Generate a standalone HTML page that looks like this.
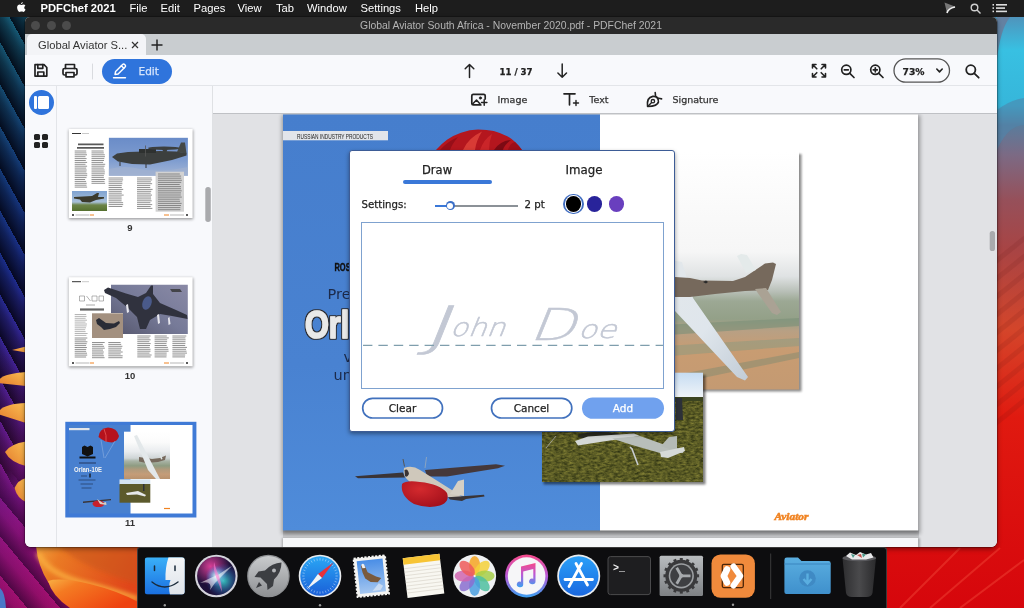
<!DOCTYPE html>
<html><head><meta charset="utf-8">
<style>
*{box-sizing:border-box;margin:0;padding:0}
html,body{width:1024px;height:608px;overflow:hidden;background:#000;font-family:"Liberation Sans","DejaVu Sans",sans-serif;}
#root{opacity:.999;position:relative;width:1024px;height:608px;overflow:hidden;background:#1a1030}
.abs{position:absolute}
#menubar{left:0;top:0;width:1024px;height:17px;background:#1d1d1d;color:#fff;font-size:11.200px;line-height:17.500px;overflow:hidden}
#menubar span{position:absolute;top:0;white-space:nowrap}
#win{left:25px;top:17px;width:972px;height:530px;border-radius:5px 5px 6px 6px;overflow:hidden;background:#f8f9fc;box-shadow:0 0 0 .5px rgba(0,0,0,.45),0 2px 5px rgba(0,0,0,.45)}
#titlebar{left:0;top:0;width:972px;height:17px;background:#2a2a2a;color:#b4b4b4;font-size:10.400px;line-height:18.500px;text-align:center;overflow:hidden}
#tabbar{left:0;top:17px;width:972px;height:21px;background:#c9cdd0}
#tab{left:2px;top:0;width:119px;height:21px;background:#f3f4f7;border-radius:5px 5px 0 0;font-size:11.2px;line-height:22px;color:#333;padding-left:11px;white-space:nowrap}
#toolbar{left:0;top:38px;width:972px;height:31px;background:#f8f9fc;border-bottom:1px solid #e3e5e9}
#iconstrip{left:0;top:69px;width:32px;height:461px;background:#f8f9fc;border-right:1px solid #e3e5e9}
#thumbs{left:32px;top:69px;width:156px;height:461px;background:#f8f9fc;border-right:1px solid #dfe1e4}
#subbar{left:188px;top:69px;width:784px;height:28px;background:#f8f9fc;border-bottom:1px solid #bfc1c5}
#doc{left:188px;top:97px;width:784px;height:433px;background:#e1e2e5;overflow:hidden}
#dock{left:137px;top:547px;width:750px;height:61px;background:#0d0d0f;border:1px solid #3a3a3a;border-bottom:none;border-radius:3px 3px 0 0}

.dj{font-family:"DejaVu Sans","Liberation Sans",sans-serif;-webkit-text-stroke:.25px currentColor}
.tl{position:absolute;top:4px;width:9px;height:9px;border-radius:50%;background:#4b4b4b}
.gq{position:absolute;width:6.500px;height:6.500px;border-radius:1.600px;background:#222}
.sb{top:8px;font-size:9.500px;line-height:12px;color:#333;white-space:nowrap}

#dlg{left:136px;top:36px;width:326px;height:282px;background:#fff;border:1px solid #3d5c96;border-radius:3px;box-shadow:0 2px 4px rgba(0,0,0,.4)}
.btn{height:21px;font-size:10.500px;line-height:21px;text-align:center;color:#222}
</style></head><body>
<div id="root">
<div class="abs" style="left:0;top:0;width:140px;height:608px;background:linear-gradient(180deg,rgba(0,0,0,0) 55%,rgba(140,16,110,.5) 100%),repeating-linear-gradient(241deg,rgba(0,0,0,0) 0,rgba(0,0,8,.35) 7px,rgba(0,0,10,.82) 20.400px),linear-gradient(180deg,#17607a 0,#15506e 10%,#14387a 30%,#1c2c8c 45%,#3a2496 58%,#5a1c90 72%,#8a1486 85%,#a01078 100%)"></div>
<div class="abs" style="left:0;top:470px;width:140px;height:138px;background:linear-gradient(180deg,rgba(0,0,0,0) 0,rgba(0,0,0,1) 30px) ,#000;-webkit-mask-image:linear-gradient(180deg,transparent 0,#000 30px);mask-image:linear-gradient(180deg,transparent 0,#000 30px)"><div class="abs" style="left:0;top:0;width:140px;height:138px;background:repeating-linear-gradient(230deg,rgba(40,0,50,0) 0,rgba(40,0,50,.12) 9px,rgba(30,0,40,.62) 25px),linear-gradient(180deg,#6a188a 0,#8c1480 40%,#a20f6c 100%)"></div></div>
<svg class="abs" style="left:0;top:0" width="1024" height="608" viewBox="0 0 1024 608">
<defs>
<linearGradient id="wr" x1="0" y1="0" x2="0" y2="1"><stop offset="0.028" stop-color="#4f94bc"/><stop offset="0.082" stop-color="#38c0e2"/><stop offset="0.173" stop-color="#36b6da"/><stop offset="0.206" stop-color="#5a7c9c"/><stop offset="0.255" stop-color="#7c6a84"/><stop offset="0.329" stop-color="#96505a"/><stop offset="0.411" stop-color="#a84444"/><stop offset="0.543" stop-color="#d4452a"/><stop offset="0.686" stop-color="#e01a10"/><stop offset="1.000" stop-color="#d6060c"/></linearGradient>
<linearGradient id="wo" x1="0" y1="0" x2="1" y2="1">
<stop offset="0" stop-color="#f09a38"/><stop offset="0.500" stop-color="#ee6a1c"/><stop offset="1" stop-color="#e83a10"/>
</linearGradient>
<linearGradient id="wo1" x1="0" y1="0" x2="1" y2="0.300"><stop offset="0" stop-color="#f2a23c"/><stop offset="0.250" stop-color="#ea7a24"/><stop offset="1" stop-color="#e0461a"/></linearGradient><linearGradient id="wo2" x1="0" y1="0" x2="1" y2="0.600"><stop offset="0" stop-color="#f8b044"/><stop offset="0.300" stop-color="#f47a22"/><stop offset="1" stop-color="#ee4210"/></linearGradient><filter id="wbl" x="-20%" y="-20%" width="140%" height="140%"><feGaussianBlur stdDeviation="2"/></filter><linearGradient id="sp" x1="1" y1="0" x2="0" y2="1">
<stop offset="0" stop-color="#fbbf52"/><stop offset="1" stop-color="#e27a2c"/>
</linearGradient>
</defs>
<g fill="url(#sp)">
<path d="M26 346.500 L26 352.500 L12 350 Z"/>
<path d="M26 372 L26 386 L-2 383 Q-2 374 26 372 Z"/>
<path d="M26 403 L26 423 L-2 414 Q0 404 26 403 Z"/>
<path d="M26 441.500 L26 466 Q10 462 5 452 Q10 444 26 441.500 Z"/>
<path d="M26 478 L26 502 Q17 498 14.500 488 Q18 480 26 478 Z"/>
</g>
<path d="M0 588 Q5 592 6 608 L0 608 Z" fill="#4a78c8"/>
<path d="M36 546 L140 546 L140 608 L72 608 Q58 598 48 582 Q38 566 36 546 Z" fill="url(#wo1)"/>
<path d="M60 547 Q80 566 137 584 L137 547 Z" fill="#c8561a" opacity="0.550" filter="url(#wbl)"/>
<path d="M38 553 Q46 572 80 582 Q112 590 138 599" fill="none" stroke="#fbb040" stroke-width="5" opacity="0.850" filter="url(#wbl)"/>
<path d="M48 581 Q60 577 90 584 Q118 591 138 602 L138 608 L70 608 Q52 596 48 581 Z" fill="url(#wo2)"/>
<rect x="880" y="0" width="144" height="608" fill="url(#wr)"/>
<g stroke="#5a1010" stroke-width="5" opacity="0.110" fill="none">
<path d="M995 262 L1026 237"/><path d="M995 280 L1026 255"/><path d="M995 298 L1026 273"/><path d="M995 316 L1026 291"/><path d="M995 334 L1026 309"/><path d="M995 352 L1026 327"/><path d="M995 370 L1026 345"/><path d="M995 388 L1026 363"/><path d="M995 406 L1026 381"/><path d="M995 424 L1026 399"/>
</g>
<g stroke="#ff6a50" stroke-width="2" opacity="0.300" fill="none">
<path d="M900 608 L960 548"/><path d="M930 608 L1000 548"/><path d="M960 608 L1024 560"/>
</g>
<path d="M997 17 L1010 17 Q1000 30 997 60 Z" fill="#6a7a98" opacity="0.800"/>
<path d="M997 110 Q1010 100 1024 98 L1024 125 Q1008 125 997 150 Z" fill="#4f86ac" opacity="0.600"/>
</svg>
<div id="menubar" class="abs">
<svg class="abs" style="left:0;top:0" width="1024" height="17" viewBox="0 0 1024 17">
<g fill="#fff">
<path d="M23.6 4.6c-.9 0-1.6.5-2.1.5s-1.100-.5-1.900-.5c-1.200 0-2.500 1-2.500 3 0 1.900 1.300 4.400 2.400 4.400.7 0 1-.4 1.900-.4s1.100.4 1.900.4c.9 0 1.700-1.200 2.200-2.400-1.700-.8-1.600-3.200-.1-3.900-.5-.7-1.100-1.100-1.800-1.100z"/>
<path d="M22.700 2c-.8.100-1.700.9-1.600 2.100.9 0 1.700-.9 1.600-2.100z"/>
</g>
<g fill="none" stroke="#cfcfcf" stroke-width="1.400">
<circle cx="974.500" cy="7.500" r="3.300"/><path d="M977 10 L980.500 13.500"/>
</g>
<g fill="#dedede"><rect x="992.500" y="4" width="1.500" height="1.600"/><rect x="996" y="4" width="11" height="1.600"/>
<rect x="992.500" y="7.300" width="1.500" height="1.600"/><rect x="996" y="7.300" width="9" height="1.600"/>
<rect x="992.500" y="10.600" width="1.500" height="1.600"/><rect x="996" y="10.600" width="11" height="1.600"/></g>
<path d="M944.500 2.500 L955.500 6.800 L950.500 8.500 L947 13 Z" fill="#777"/>
<path d="M947 13 Q948 8.500 955 7" fill="none" stroke="#eee" stroke-width="1.600"/>
</svg>
<span style="left:40.500px;font-weight:bold">PDFChef 2021</span>
<span style="left:129.500px">File</span>
<span style="left:160.500px">Edit</span>
<span style="left:193.500px">Pages</span>
<span style="left:237.500px">View</span>
<span style="left:276px">Tab</span>
<span style="left:307px">Window</span>
<span style="left:360.500px">Settings</span>
<span style="left:415px">Help</span>
</div>
<div id="win" class="abs">
 <div id="titlebar" class="abs"><i class="tl" style="left:6px"></i><i class="tl" style="left:22px"></i><i class="tl" style="left:37px"></i>Global Aviator South Africa - November 2020.pdf - PDFChef 2021</div>
 <div id="tabbar" class="abs"><div id="tab" class="abs">Global Aviator S...<svg class="abs" style="left:103.500px;top:7px" width="8" height="8" viewBox="0 0 8 8"><path d="M1 1L7 7M7 1L1 7" stroke="#333" stroke-width="1.200"/></svg></div><svg class="abs" style="left:126px;top:5px" width="12" height="12" viewBox="0 0 12 12"><path d="M6 .5V11.500M.5 6H11.500" stroke="#222" stroke-width="1.500"/></svg></div>
 <div id="toolbar" class="abs">
<svg class="abs" style="left:0;top:0" width="972" height="31" viewBox="25 55 972 31" fill="none" stroke="#222" stroke-width="1.700" stroke-linejoin="round" stroke-linecap="round">
<!-- save -->
<path d="M35 64.700h9l2.800 2.800v8.600h-11.800z"/><path d="M37.800 64.700v3.600h5v-3.600M37.800 76v-4h6v4"/>
<!-- print -->
<path d="M65.500 68.500v-4h9v4"/><rect x="63" y="68.500" width="14" height="6.500" rx="1.500"/><rect x="66" y="72.500" width="8" height="4.300" fill="#f8f9fc"/>
<path d="M92.500 64V79" stroke="#d9dbdf" stroke-width="1"/>
<!-- arrows -->
<path d="M469.500 77.500V64.500M465.200 68.800l4.300-4.300 4.300 4.300" stroke-width="1.500"/>
<path d="M562.200 64V77.200M557.900 73l4.300 4.300 4.300-4.300" stroke-width="1.500"/>
<!-- fullscreen -->
<g stroke-width="1.600"><path d="M812.500 68v-3.500h3.500M812.800 64.800l4 4M825.500 68v-3.500h-3.500M825.200 64.800l-4 4M812.500 73.500v3.500h3.500M812.800 76.700l4-4M825.500 73.500v3.500h-3.500M825.200 76.700l-4-4"/></g>
<!-- zoom out -->
<g stroke-width="1.700"><circle cx="846.300" cy="69.800" r="4.600"/><path d="M849.800 73.300l4.200 4.200M844.300 69.800h4"/></g>
<g stroke-width="1.700"><circle cx="875.300" cy="69.800" r="4.600"/><path d="M878.800 73.300l4.200 4.200M873.300 69.800h4M875.300 67.800v4"/></g>
<rect x="894" y="58.800" width="55.500" height="23.400" rx="11.700" stroke="#555" stroke-width="1.300"/>
<path d="M936.800 69l2.700 2.900 2.700-2.900" stroke-width="1.600"/>
<g stroke-width="1.800"><circle cx="970.800" cy="69.800" r="4.600"/><path d="M974.300 73.300l4.400 4.400"/></g>
</svg>
<div class="abs" style="left:77px;top:3.500px;width:70px;height:25.500px;border-radius:13px;background:#2f74dc"></div>
<svg class="abs" style="left:86px;top:7px" width="18" height="18" viewBox="111 62 18 18" fill="none" stroke="#fff" stroke-width="1.400" stroke-linejoin="round" stroke-linecap="round"><path d="M113.500 77.800h12"/><path d="M115 74.500l.6-3 7-7c.6-.6 1.500-.6 2.100 0l.4.400c.6.600.6 1.500 0 2.100l-7 7z"/><path d="M121.300 65.700l2.500 2.500"/></svg>
<div class="abs dj" style="left:113.500px;top:9.500px;font-size:10.500px;line-height:13px;color:#d6e4fb">Edit</div>
<div class="abs dj" style="left:474.500px;top:11.500px;font-size:8.600px;line-height:11px;color:#222;font-weight:bold;white-space:nowrap">11 / 37</div>
<div class="abs dj" style="left:877.500px;top:11px;font-size:9.200px;line-height:11px;color:#222;font-weight:bold">73%</div>
</div>
 <div id="iconstrip" class="abs">
<div class="abs" style="left:3.500px;top:3.800px;width:25.400px;height:25.400px;border-radius:50%;background:#2f74dc"></div>
<div class="abs" style="left:8.600px;top:10px;width:3px;height:12.600px;border-radius:1px;background:#fff"></div>
<div class="abs" style="left:13.400px;top:10px;width:10.600px;height:12.600px;border-radius:1.500px;background:#fff"></div>
<i class="gq" style="left:8.500px;top:47.500px"></i><i class="gq" style="left:16.500px;top:47.500px"></i><i class="gq" style="left:8.500px;top:55.500px"></i><i class="gq" style="left:16.500px;top:55.500px"></i>
</div>
 <div id="thumbs" class="abs">
<svg class="abs" style="left:0;top:0" width="156" height="461" viewBox="57 86 156 461">
<defs>
<filter id="tb2" x="-10%" y="-10%" width="120%" height="120%"><feGaussianBlur stdDeviation="1.600"/></filter>
<linearGradient id="t1sky" x1="0" y1="0" x2="0" y2="1"><stop offset="0" stop-color="#6a8cc8"/><stop offset="0.600" stop-color="#7f9dd0"/><stop offset="1" stop-color="#a3b6d6"/></linearGradient>
<linearGradient id="t1b" x1="0" y1="0" x2="0" y2="1"><stop offset="0" stop-color="#7fa3d2"/><stop offset="0.550" stop-color="#a9c0d8"/><stop offset="0.700" stop-color="#6c8448"/><stop offset="1" stop-color="#55702f"/></linearGradient>
<linearGradient id="t2sky" x1="0" y1="1" x2="1" y2="0"><stop offset="0" stop-color="#55566c"/><stop offset="0.500" stop-color="#767a98"/><stop offset="1" stop-color="#8a8aa6"/></linearGradient>
<linearGradient id="p1t" x1="0" y1="0" x2="0" y2="1">
<stop offset="0" stop-color="#ffffff"/><stop offset="0.220" stop-color="#fbfbfb"/><stop offset="0.420" stop-color="#e9ecee"/><stop offset="0.560" stop-color="#cfd5d6"/><stop offset="0.620" stop-color="#a9b3a6"/><stop offset="0.720" stop-color="#8e9c82"/><stop offset="0.800" stop-color="#b09a7c"/><stop offset="0.900" stop-color="#c49c78"/><stop offset="1" stop-color="#b8926e"/>
</linearGradient>
</defs>
<rect x="68.800" y="129.800" width="124.300" height="89.500" fill="#000" opacity="0.400" filter="url(#tb2)"/>
<rect x="68.800" y="129" width="123.800" height="89" fill="#fff"/>
<path d="M72 133.500h9" stroke="#333" stroke-width="1"/><path d="M82 133.500h7" stroke="#bbb" stroke-width="0.800"/>
<rect x="108.900" y="137.800" width="79" height="38" fill="url(#t1sky)"/>
<path d="M112 157 L117 153.500 L128 152 L160 151 L176 151.500 L186.500 153 L186.500 155.500 L172 160 L150 164.500 L132 164 L118 161.500 Z" fill="#3c3f3e"/>
<path d="M139 149 h17 v4 h-17z" fill="#2e3130"/><path d="M145.500 145.500 v11" stroke="#555" stroke-width="0.800"/>
<ellipse cx="164" cy="148.300" rx="16" ry="1.700" fill="#3c3f3e"/><path d="M162 149 l1.500 3 h3 l1 -3z" fill="#3c3f3e"/>
<path d="M177 152 L181 142.500 L185 142.500 L186.500 153.500 Z" fill="#444846"/>
<path d="M120 162v4M146 164v4" stroke="#333" stroke-width="1"/>
<path d="M108.900 169 Q125 165 140 169 Q160 173 187.900 167 L187.900 175.800 L108.900 175.800 Z" fill="#9fb0d0" opacity="0.800"/>
<path d="M78 144.300H103.500M77 147.800H104" stroke="#222" stroke-width="1.700" opacity="0.750"/>
<path d="M74.7 151.0H86.2M74.7 152.9H86.4M74.7 154.8H87.0M74.7 156.7H85.5M74.7 158.6H86.6M74.7 160.5H85.8M74.7 162.4H87.1M74.7 164.3H85.5M74.7 166.2H87.1M74.7 168.1H86.2M74.7 170.0H86.7M74.7 171.9H86.4M74.7 173.8H87.2M74.7 175.7H87.2M74.7 177.6H86.5M74.7 179.5H85.1M74.7 181.4H86.1M74.7 183.3H86.7M74.7 185.2H86.5M74.7 187.1H87.1" stroke="#3a3a3a" stroke-width="0.9" opacity="0.62" fill="none"/>
<path d="M91.5 151.0H103.6M91.5 152.9H103.8M91.5 154.8H104.8M91.5 156.7H104.9M91.5 158.6H104.3M91.5 160.5H104.0M91.5 162.4H103.1M91.5 164.3H105.2M91.5 166.2H104.6M91.5 168.1H103.8M91.5 170.0H104.6M91.5 171.9H104.9M91.5 173.8H104.7M91.5 175.7H103.9M91.5 177.6H103.9M91.5 179.5H105.1M91.5 181.4H104.5M91.5 183.3H105.1" stroke="#3a3a3a" stroke-width="0.9" opacity="0.62" fill="none"/>
<path d="M108.6 178.0H122.9M108.6 179.9H123.1M108.6 181.8H122.3M108.6 183.7H122.4M108.6 185.6H121.7M108.6 187.5H121.8M108.6 189.4H123.2M108.6 191.3H121.7M108.6 193.2H121.8M108.6 195.1H123.7M108.6 197.0H121.6M108.6 198.9H121.7M108.6 200.8H121.6M108.6 202.7H123.1M108.6 204.6H123.2M108.6 206.5H122.3" stroke="#3a3a3a" stroke-width="0.9" opacity="0.62" fill="none"/>
<path d="M137.0 178.0H151.6M137.0 179.9H152.1M137.0 181.8H150.9M137.0 183.7H152.1M137.0 185.6H150.3M137.0 187.5H150.3M137.0 189.4H152.6M137.0 191.3H151.2M137.0 193.2H150.7M137.0 195.1H152.0M137.0 197.0H151.0M137.0 198.9H151.1M137.0 200.8H151.7M137.0 202.7H150.4M137.0 204.6H152.2M137.0 206.5H150.7M137.0 208.4H152.4" stroke="#3a3a3a" stroke-width="0.9" opacity="0.62" fill="none"/>
<rect x="155.600" y="171.700" width="28.400" height="40" fill="#d2d2d2"/>
<path d="M158.0 174.0H179.8M158.0 176.1H181.1M158.0 178.2H181.2M158.0 180.3H181.9M158.0 182.4H181.2M158.0 184.5H179.7M158.0 186.6H181.0M158.0 188.7H181.0M158.0 190.8H181.7M158.0 192.9H181.0M158.0 195.0H180.8M158.0 197.1H181.8M158.0 199.2H179.7M158.0 201.3H180.1M158.0 203.4H181.6M158.0 205.5H181.0M158.0 207.6H180.4M158.0 209.7H180.4" stroke="#333" stroke-width="0.8" opacity="0.6" fill="none"/>
<rect x="72" y="191" width="35" height="20" fill="url(#t1b)"/>
<path d="M74 197 L92 196 L97 193 L99 193 L98 197 L104 197 L104 198.500 L96 200 L90 202.500 L82 202 L80 199.500 L74 198.500 Z" fill="#3b3a2c"/>
<path d="M72 215h2" stroke="#222" stroke-width="1.400"/><path d="M75.500 215h14" stroke="#999" stroke-width="0.700"/><path d="M90 215h4" stroke="#f08322" stroke-width="1"/>
<path d="M164 215h5" stroke="#f08322" stroke-width="1"/><path d="M170 215h14" stroke="#999" stroke-width="0.700"/><path d="M186 215h2" stroke="#222" stroke-width="1.400"/>
<rect x="68.800" y="278" width="124.300" height="89.500" fill="#000" opacity="0.400" filter="url(#tb2)"/>
<rect x="68.800" y="277.200" width="123.800" height="89" fill="#fff"/>
<path d="M72 281.700h9" stroke="#333" stroke-width="1"/><path d="M82 281.700h7" stroke="#bbb" stroke-width="0.800"/>
<path d="M111 284.700 H187.800 V334 H123 V313 H111 Z" fill="url(#t2sky)"/>
<path d="M104 290 L108 287.500 L126 293.500 L138 297 L146 293 L151 285.500 L153 285.500 L153 294 L160 303 L176 310 L187 315 L187.500 319 L172 316 L160 314 L150 320 L146 329 L140 329 L137 317 L128 308 L116 298 L105 293 Z" fill="#30323e"/>
<ellipse cx="147" cy="303" rx="4.500" ry="7" fill="#4a5a8a" transform="rotate(20 147 303)"/>
<path d="M126 305 l2 -1 l1 8 l-2 1z M157 315 l2 -1 l1 9 l-2 1z M168 318 l1.500 -1 l1 7 l-2 1z" fill="#e8e8ee"/>
<path d="M170 289 h10 l2 3 h-10z" fill="#333" opacity="0.800"/>
<rect x="92" y="313.300" width="31" height="24.700" fill="#a3907f"/>
<path d="M96 320 L99 318 L106 323 L114 323.500 L119 321 L120 323 L116 327 L110 329 L104 330 L101 327 L97 324 Z" fill="#2a2c36"/>
<path d="M79.500 296h5v5h-5zM86.500 296l4 5M92 296h5v5h-5zM99 296h4.500v5H99z" stroke="#666" stroke-width="0.700" fill="none" opacity="0.700"/><path d="M86 305h9" stroke="#888" stroke-width="1.200" opacity="0.600"/>
<path d="M80 309.500H104" stroke="#222" stroke-width="2.200" opacity="0.700"/>
<path d="M74.7 314.5H86.2M74.7 316.4H86.5M74.7 318.3H85.6M74.7 320.2H87.0M74.7 322.1H85.5M74.7 324.0H87.0M74.7 325.9H86.6M74.7 327.8H86.0M74.7 329.7H85.2M74.7 331.6H85.6M74.7 333.5H87.6M74.7 335.4H86.4" stroke="#777" stroke-width="0.9" opacity="0.6" fill="none"/>
<path d="M74.7 338.0H87.3M74.7 339.9H85.9M74.7 341.8H87.4M74.7 343.7H86.7M74.7 345.6H86.1M74.7 347.5H86.9M74.7 349.4H86.2M74.7 351.3H86.1M74.7 353.2H87.0M74.7 355.1H87.2M74.7 357.0H86.1" stroke="#3a3a3a" stroke-width="0.9" opacity="0.62" fill="none"/>
<path d="M92.0 342.5H104.7M92.0 344.4H102.8M92.0 346.3H104.1M92.0 348.2H104.8M92.0 350.1H103.0M92.0 352.0H103.8M92.0 353.9H103.4M92.0 355.8H103.9M92.0 357.7H104.6" stroke="#3a3a3a" stroke-width="0.9" opacity="0.62" fill="none"/>
<path d="M108.3 342.5H120.6M108.3 344.4H121.2M108.3 346.3H122.4M108.3 348.2H121.7M108.3 350.1H121.0M108.3 352.0H122.7M108.3 353.9H120.7M108.3 355.8H122.7M108.3 357.7H122.5" stroke="#3a3a3a" stroke-width="0.9" opacity="0.62" fill="none"/>
<path d="M137.3 336.0H150.6M137.3 337.9H149.5M137.3 339.8H150.6M137.3 341.7H149.3M137.3 343.6H150.7M137.3 345.5H150.0M137.3 347.4H149.7M137.3 349.3H150.5M137.3 351.2H150.5M137.3 353.1H149.5M137.3 355.0H151.6M137.3 356.9H150.7" stroke="#3a3a3a" stroke-width="0.9" opacity="0.62" fill="none"/>
<path d="M154.6 336.0H166.8M154.6 337.9H168.8M154.6 339.8H167.2M154.6 341.7H167.1M154.6 343.6H166.5M154.6 345.5H166.7M154.6 347.4H167.9M154.6 349.3H168.4M154.6 351.2H168.6M154.6 353.1H166.7M154.6 355.0H166.7M154.6 356.9H166.5" stroke="#3a3a3a" stroke-width="0.9" opacity="0.62" fill="none"/>
<path d="M172.4 336.0H186.3M172.4 337.9H185.4M172.4 339.8H185.6M172.4 341.7H185.5M172.4 343.6H185.4M172.4 345.5H185.2M172.4 347.4H187.0M172.4 349.3H186.0M172.4 351.2H186.5M172.4 353.1H187.0M172.4 355.0H185.2M172.4 356.9H185.0" stroke="#3a3a3a" stroke-width="0.9" opacity="0.62" fill="none"/>
<path d="M72 363h2" stroke="#222" stroke-width="1.400"/><path d="M75.500 363h14" stroke="#999" stroke-width="0.700"/><path d="M90 363h4" stroke="#f08322" stroke-width="1"/>
<path d="M164 363h5" stroke="#f08322" stroke-width="1"/><path d="M170 363h14" stroke="#999" stroke-width="0.700"/><path d="M186 363h2" stroke="#222" stroke-width="1.400"/>
<rect x="65.300" y="421.800" width="131.100" height="95.700" fill="#3f7ad6"/>
<rect x="69" y="425" width="61.500" height="88.500" fill="#4880cf"/>
<rect x="130.500" y="425" width="62" height="88.500" fill="#fff"/>
<rect x="69" y="428" width="20.500" height="2.200" fill="#e2e5ea"/>
<path d="M98.500 437 Q99 429 108 427.600 Q117 428 119 436 Q118 441 112 442.500 Q104 442 98.500 437Z" fill="#b5121c"/><path d="M104 429 Q107 435 106 442" stroke="#e04a4a" stroke-width="1" fill="none"/>
<path d="M101 440 L104 458 M115 441 L105 458" stroke="#dfe6f2" stroke-width="0.400" opacity="0.700"/>
<path d="M82 447 L84.500 445.500 L87.500 447 L90.500 445.500 L93 447 L93 454 L87.500 456.500 L82 454 Z" fill="#111"/><rect x="79.500" y="456.500" width="16" height="2" fill="#111"/>
<path d="M79 463h17" stroke="#1c2a4a" stroke-width="1.400" opacity="0.600"/>
<text x="74" y="472" font-family="Liberation Sans,sans-serif" font-weight="bold" font-size="7.600" fill="#f4f4f4" textLength="28" lengthAdjust="spacingAndGlyphs">Orlan-10E</text>
<path d="M81 476h6M78.500 480h17M80.500 484h12.500M81.500 488h10" stroke="#1c2a4a" stroke-width="1.200" opacity="0.600"/><path d="M90 473.500v4" stroke="#111" stroke-width="1.300"/>
<path d="M83 501.500 L111 499 L111 500.300 L83 503 Z" fill="#3a3436"/><ellipse cx="98.500" cy="503.800" rx="6" ry="3.300" fill="#c8202a"/><path d="M97 499 L103 503 L106 502 L106.500 505 L100 504Z" fill="#d5cfc4"/>
<rect x="124" y="431.700" width="46" height="47.300" fill="url(#p1t)"/>
<path d="M139 457 L152 459 L160 458 L166 455.500 L165 460 L158 462 L146 463 L139 461.500Z" fill="#76695c"/><path d="M134 436 L137 435 L160 479 L156 479 L148 470 Z" fill="#e3e8ea"/><path d="M159 453 L160.500 452 L162.500 459 L161 459.500Z" fill="#dfe6e6"/>
<rect x="119.500" y="479.400" width="30.800" height="5" fill="#d5e4f2"/><rect x="119.500" y="484" width="30.800" height="18.700" fill="#5c5a2c"/>
<path d="M126 493 L138 491 L146 495 L145 496.500 L137 494.500 L127 495Z" fill="#e6e8ea"/><path d="M143 484 h1.500 v7 h-1.500z" fill="#2c3038"/>
<path d="M164 508.500h6" stroke="#f08322" stroke-width="1.200"/>
<rect x="205.300" y="187" width="5.500" height="35" rx="2.700" fill="#a9aaad"/>
<g font-family="Liberation Sans,sans-serif" font-weight="bold" font-size="9.500" fill="#333" text-anchor="middle">
<text x="130" y="230.700">9</text><text x="130" y="379.200">10</text><text x="130" y="525.900">11</text>
</g>
</svg>
</div>
 <div id="subbar" class="abs">
<svg class="abs" style="left:0;top:0" width="784" height="27" viewBox="213 86 784 27" fill="none" stroke="#222" stroke-width="1.500" stroke-linejoin="round" stroke-linecap="round">
<!-- image+ -->
<path d="M485.200 99v-3.200a1.500 1.500 0 0 0-1.500-1.500h-10.400a1.500 1.500 0 0 0-1.500 1.500v7.600a1.500 1.500 0 0 0 1.500 1.500h7.500" stroke-width="1.700"/><path d="M472.600 104l3.900-4 3.800 4.300" stroke-width="1.500"/><circle cx="480.400" cy="98" r="1.200" fill="#222" stroke-width="0.600"/><path d="M484.200 99.800v5.400M481.500 102.500h5.400" stroke-width="1.500"/>
<!-- T+ -->
<path d="M564 93.800h11M569.500 93.800v11" stroke-width="1.700"/><path d="M576 100.500v5M573.500 103h5" stroke-width="1.400"/>
<!-- signature -->
<path d="M647.600 106.500C646.900 101.500 648.300 97.200 652.800 96.400C656.800 95.900 658.900 98.800 658.400 102C657.800 105.200 653.500 106.300 647.600 106.500z" stroke-width="1.700"/><circle cx="652.900" cy="101.200" r="1.700" stroke-width="1.300"/><path d="M648 106.200l3.600-3.700" stroke-width="1.300"/><path d="M655.200 92.500L655.600 96.300Q657.800 98.600 661.600 98.900" stroke-width="1.600"/>
</svg>
<div class="abs dj sb" style="left:284.500px">Image</div>
<div class="abs dj sb" style="left:376.300px">Text</div>
<div class="abs dj sb" style="left:459.500px">Signature</div>
</div>
 <div id="doc" class="abs">
<svg class="abs" style="left:0;top:-1px" width="784" height="434" viewBox="213 113 784 434">
<defs>
<filter id="bl2" x="-10%" y="-10%" width="120%" height="120%"><feGaussianBlur stdDeviation="2"/></filter>
<filter id="bl1" x="-10%" y="-10%" width="120%" height="120%"><feGaussianBlur stdDeviation="1.200"/></filter>
<filter id="bl05" x="-10%" y="-10%" width="120%" height="120%"><feGaussianBlur stdDeviation="0.600"/></filter>
<linearGradient id="p1" x1="0" y1="0" x2="0" y2="1"><stop offset="0.000" stop-color="#ffffff"/><stop offset="0.420" stop-color="#f6f6f6"/><stop offset="0.524" stop-color="#dfe2e3"/><stop offset="0.586" stop-color="#b9c0b8"/><stop offset="0.628" stop-color="#9ca894"/><stop offset="0.703" stop-color="#93a088"/><stop offset="0.753" stop-color="#b8a084"/><stop offset="0.836" stop-color="#c89c72"/><stop offset="1.000" stop-color="#c49a72"/></linearGradient>
<linearGradient id="p2s" x1="0" y1="0" x2="0" y2="1"><stop offset="0" stop-color="#c6dcf2"/><stop offset="1" stop-color="#f2f5f8"/></linearGradient>
<linearGradient id="p2g" x1="0" y1="0" x2="0" y2="1"><stop offset="0" stop-color="#4a4c22"/><stop offset="0.300" stop-color="#58592a"/><stop offset="0.700" stop-color="#66642f"/><stop offset="1" stop-color="#525228"/></linearGradient>
<linearGradient id="wing1" x1="0" y1="0" x2="1" y2="1"><stop offset="0" stop-color="#e4e8ea"/><stop offset="0.600" stop-color="#dfe6ec"/><stop offset="1" stop-color="#c2ccd6"/></linearGradient>
<radialGradient id="redb" cx="0.4" cy="0.3" r="0.8"><stop offset="0" stop-color="#d42a2e"/><stop offset="1" stop-color="#a00e1a"/></radialGradient>
<linearGradient id="bluepg" x1="0" y1="0" x2="0" y2="1"><stop offset="0" stop-color="#467ecd"/><stop offset="0.600" stop-color="#4982d1"/><stop offset="1" stop-color="#4f8cda"/></linearGradient>
<filter id="outl" x="-10%" y="-20%" width="130%" height="150%"><feMorphology in="SourceAlpha" operator="dilate" radius="1.300" result="d"/><feGaussianBlur in="d" stdDeviation="0.400" result="db"/><feFlood flood-color="#2c2c30"/><feComposite in2="db" operator="in" result="o"/><feMerge><feMergeNode in="o"/><feMergeNode in="SourceGraphic"/></feMerge></filter>
<clipPath id="cp1"><rect x="566" y="149" width="233" height="240.500"/></clipPath>
<filter id="grass" x="0" y="0" width="100%" height="100%" color-interpolation-filters="sRGB"><feTurbulence type="fractalNoise" baseFrequency="0.220 0.450" numOctaves="3" seed="4" result="n"/><feColorMatrix in="n" type="matrix" values="0.500 0 0 0 0.100  0.460 0 0 0 0.125  0.200 0 0 0 0.040  0 0 0 0 1" result="c"/><feComposite in="c" in2="SourceGraphic" operator="in"/></filter>
<clipPath id="cp2"><rect x="542" y="372.700" width="161" height="109.300"/></clipPath>
<clipPath id="cpage"><rect x="283" y="114.500" width="635" height="416"/></clipPath>
</defs>
<!-- page shadow -->
<rect x="282" y="115" width="638" height="419" fill="#000" opacity="0.35" filter="url(#bl2)"/>
<rect x="283" y="114.500" width="317" height="416" fill="url(#bluepg)"/>
<rect x="600" y="114.500" width="318" height="416" fill="#fff"/>
<!-- label -->
<rect x="283" y="131" width="105" height="9.300" fill="#e2e5ea"/>
<text x="297" y="138.600" font-family="Liberation Sans,sans-serif" font-size="7" fill="#222" textLength="76" lengthAdjust="spacingAndGlyphs">RUSSIAN INDUSTRY PRODUCTS</text>
<!-- parachute -->
<path d="M436 150 Q441 144 447 139.700 Q454 135 461 132.700 Q470 129.500 478 129.500 Q487 129.500 493.700 131 Q501 133 507.800 136.500 Q516 141.500 522 150 Z" fill="#b4161e"/>
<path d="M463 150 Q468 138 482 131.500 Q476 141 475 150 Z" fill="#e4483e" opacity="0.750"/>
<path d="M480 150 Q484 139 492 134 Q489 142 489 150 Z" fill="#d83030" opacity="0.600"/>
<path d="M494 150 Q500 141 511 140 Q504 145 503 150 Z" fill="#6e0812" opacity="0.800"/>
<path d="M440 150 Q448 141 458 137 Q452 144 450 150 Z" fill="#8a0c16" opacity="0.700"/>
<path d="M508 150 Q510 143 515 142 Q519 146 522 150 Z" fill="#960e18" opacity="0.800"/>
<!-- left page texts -->
<text x="334.500" y="270.500" font-family="Liberation Sans,sans-serif" font-weight="bold" font-size="10" fill="#111" stroke="#111" stroke-width="0.400" textLength="16.100" lengthAdjust="spacingAndGlyphs">ROS</text>
<text x="327.500" y="298.600" font-family="DejaVu Sans,Liberation Sans,sans-serif" font-size="14.500" fill="#1c2a4a">Pre</text>
<text x="305" y="337.600" font-family="Liberation Sans,sans-serif" font-weight="bold" font-size="38" fill="#e9e9e9" stroke="#e9e9e9" stroke-width="1.600" stroke-linejoin="round" filter="url(#outl)" textLength="44.300" lengthAdjust="spacingAndGlyphs">Orl</text>
<text x="343.500" y="361.500" font-family="DejaVu Sans,Liberation Sans,sans-serif" font-size="14.500" fill="#1c2a4a">v</text>
<text x="333.500" y="380" font-family="DejaVu Sans,Liberation Sans,sans-serif" font-size="14.500" fill="#1c2a4a">un</text>
<!-- small plane -->
<g>
<path d="M355 476.200 L403 472.500 L405 477.500 L358 478.200 Z" fill="#3a3436"/>
<path d="M425 470 L496 464.300 L505 465.800 L498 468.200 L447 476.500 L427 476.500 Z" fill="#45383a"/>
<path d="M404 468 Q412 464.500 420 470 L436 480 L455 492 L462 497 L448 497 L436 489 L410 482 Q402 476 404 468 Z" fill="#cfc8bb"/>
<path d="M404.500 470 Q408 468 409 474 Q407 478 405 476 Z" fill="#3a3436"/>
<path d="M450 494 L458 481 L464 479.500 L464 496 Z" fill="#d5cfc4"/>
<path d="M448 497.300 L484 494.800 L484.500 496.500 L466 499 L462 501 L450 499.500 Z" fill="#3a3436"/>
<path d="M402 484 Q406 480 420 482 Q440 484 447 493 Q450 502 440 505.500 Q428 509 414 504 Q400 496 402 484 Z" fill="url(#redb)"/>
<path d="M404.500 466.500 L403 459" stroke="#555" stroke-width="1"/><path d="M425 468 L426.500 457" stroke="#9ab" stroke-width="0.800"/>
</g>
<!-- photo 1 -->
<rect x="567" y="154" width="234.500" height="237.500" fill="#000" opacity="0.450" filter="url(#bl1)"/>
<rect x="566" y="152" width="233" height="237.500" fill="url(#p1)"/>
<g clip-path="url(#cp1)">
<path d="M566 330 L799 318 L799 326 L566 342 Z" fill="#7a9078" opacity="0.600"/>
<path d="M566 352 L799 338 L799 346 L566 364 Z" fill="#8a9a80" opacity="0.500"/>
<path d="M600 389 L799 352 L799 358 L650 389 Z" fill="#7a8a70" opacity="0.450"/>
<!-- plane -->
<path d="M640 255 L682 262 L693 298 L748 377 L745 380.500 L737 377 L675 311 L640 300 Z" fill="url(#wing1)"/>
<path d="M640 274 L675 277 L690 278 L702 280.500 L733 281 L745 277 L765 263.500 L773 262.500 L776 264 L772 280 L768 290 L745 291 L715 294 L690 297 L675 297 L640 292 Z" fill="#76695c"/>
<path d="M737 256 L741 254 L747 255 L756 270 L746 273 Z" fill="#e4eaea"/>
<path d="M755 289 L766 288 L781 312 L777 315 L772 313 Z" fill="#aaa294"/>
<path d="M703 282 l3 -1.500 l2 1.500 l-2 1.500z" fill="#2a2a2a"/>
</g>
<!-- photo 2 -->
<rect x="543.500" y="375" width="162" height="109.500" fill="#000" opacity="0.500" filter="url(#bl1)"/>
<rect x="542" y="372.700" width="161" height="26" fill="url(#p2s)"/>
<rect x="542" y="398" width="161" height="84" fill="url(#p2g)"/><rect x="542" y="398" width="161" height="84" fill="#000" filter="url(#grass)" opacity="0.900"/>
<g clip-path="url(#cp2)">
<rect x="542" y="397" width="161" height="4" fill="#3c4420"/>
<path d="M676 398 L682 398 L683 420 L676 420 Z" fill="#2c3038"/>
<ellipse cx="600" cy="436" rx="22" ry="4" fill="#2a2c20"/>
<path d="M575 441 L588 436.500 L634 433.500 L640 436 L600 442 L578 445.500 Z" fill="#d4d8d6"/>
<path d="M612 438.500 L640 436 L668 446 L684 450 L683 453 L660 453 L632 445 Z" fill="#b8beba"/>
<path d="M661 446 L669 437 L677 436 L677 452 Z" fill="#b4bab6"/>
<path d="M660 452 L684 447 L685 451 L668 458 L661 457 Z" fill="#d6dad8"/>
<path d="M630 447 L632 449 L638 465" stroke="#c8ccd0" stroke-width="1.600" fill="none"/>
<path d="M546 448 L556 436" stroke="#aaa" stroke-width="0.800"/>
</g>
<!-- aviator logo -->
<text x="774.500" y="520" font-family="Liberation Serif,serif" font-weight="bold" font-style="italic" font-size="10" fill="#f08322" stroke="#f08322" stroke-width="0.500" textLength="34" lengthAdjust="spacingAndGlyphs">Aviator</text>
<!-- next page -->
<defs><linearGradient id="bsh" x1="0" y1="0" x2="0" y2="1"><stop offset="0" stop-color="#000" stop-opacity="0.220"/><stop offset="1" stop-color="#000" stop-opacity="0.060"/></linearGradient></defs>
<rect x="283" y="530.500" width="636" height="7.500" fill="url(#bsh)"/>
<rect x="282" y="538" width="638" height="20" fill="#000" opacity="0.250" filter="url(#bl1)"/>
<rect x="283" y="538" width="635" height="20" fill="#f6f7f9"/>
<!-- scrollbar -->
<rect x="989.700" y="231" width="5.300" height="20" rx="2.600" fill="#a9aaad"/>
</svg>
<div id="dlg" class="abs dj">
<div class="abs" style="left:72px;top:12px;width:30px;text-align:center;font-size:11.500px;line-height:14px;color:#222;white-space:nowrap">Draw</div>
<div class="abs" style="left:215.500px;top:12px;font-size:11.800px;line-height:14px;color:#222;white-space:nowrap">Image</div>
<div class="abs" style="left:52.500px;top:29px;width:89px;height:4px;border-radius:2px;background:#3a78d8"></div>
<div class="abs" style="left:11.500px;top:46.500px;font-size:10.200px;line-height:13px;color:#222;white-space:nowrap">Settings:</div>
<div class="abs" style="left:85px;top:54px;width:83px;height:1.600px;background:#8b9197"></div>
<div class="abs" style="left:85px;top:53.800px;width:12px;height:2px;background:#3a78d8"></div>
<div class="abs" style="left:95.500px;top:50.100px;width:9.400px;height:9.400px;border-radius:50%;background:#3a6fc8"></div><div class="abs" style="left:97px;top:51.600px;width:6.400px;height:6.400px;border-radius:50%;background:#fff"></div>
<div class="abs" style="left:174.500px;top:46.500px;font-size:10.200px;line-height:13px;color:#222;white-space:nowrap">2 pt</div>
<div class="abs" style="left:213.300px;top:42.800px;width:20.400px;height:20.400px;border-radius:50%;background:#3f6cc0"></div><div class="abs" style="left:214.800px;top:44.300px;width:17.400px;height:17.400px;border-radius:50%;background:#fff"></div>
<div class="abs" style="left:215.800px;top:45.300px;width:15.400px;height:15.400px;border-radius:50%;background:#000"></div>
<div class="abs" style="left:237px;top:45.300px;width:15.400px;height:15.400px;border-radius:50%;background:#28239a"></div>
<div class="abs" style="left:258.500px;top:45.300px;width:15.400px;height:15.400px;border-radius:50%;background:#693fbe"></div>
<div class="abs" style="left:11px;top:71px;width:303px;height:167px;border:1px solid #7fa2cf;background:#fff"></div>
<svg class="abs" style="left:12.500px;top:73px" width="300.500" height="164.500" viewBox="362.500 223 300.500 164.500">
<text transform="translate(420 343.500) skewX(-22)" font-family="DejaVu Sans Light,DejaVu Sans,sans-serif" font-weight="200" fill="#c3c8d4" stroke="#c3c8d4" stroke-width="0.500"><tspan x="0" y="0" font-size="54" textLength="30" lengthAdjust="spacingAndGlyphs">J</tspan><tspan x="25.600" y="-8.500" font-size="25" textLength="55" lengthAdjust="spacingAndGlyphs">ohn</tspan> <tspan x="106.200" y="-4.500" font-size="44" textLength="46" lengthAdjust="spacingAndGlyphs">D</tspan><tspan x="154.400" y="-6.500" font-size="25" textLength="38" lengthAdjust="spacingAndGlyphs">oe</tspan></text>
<path d="M362.500 344.300H663" stroke="#7f9ead" stroke-width="1.200" stroke-dasharray="9.400 6"/>
</svg>
<svg class="abs" style="left:0;top:240px" width="324" height="36" viewBox="350 391 324 36">
<rect x="362.700" y="398.300" width="79.800" height="19.700" rx="9.850" fill="#fff" stroke="#4171bd" stroke-width="1.700"/>
<rect x="491.500" y="398.300" width="80.300" height="19.700" rx="9.850" fill="#fff" stroke="#4171bd" stroke-width="1.700"/>
<rect x="582" y="397.500" width="82" height="21.300" rx="10.650" fill="#70a1ee"/>
</svg>
<div class="abs btn" style="left:11.500px;top:247px;width:82px">Clear</div>
<div class="abs btn" style="left:140.500px;top:247px;width:82px">Cancel</div>
<div class="abs btn" style="left:232px;top:247px;width:82px;color:#fff">Add</div>
</div>
</div>
</div>
<div id="dock" class="abs">
<svg class="abs" style="left:-1px;top:-1px" width="750" height="61" viewBox="137 547 750 61">
<defs>
<linearGradient id="fb" x1="0" y1="0" x2="0" y2="1"><stop offset="0" stop-color="#3ab0f8"/><stop offset="1" stop-color="#1a6fe0"/></linearGradient>
<linearGradient id="fw" x1="0" y1="0" x2="0" y2="1"><stop offset="0" stop-color="#f4f6f8"/><stop offset="1" stop-color="#dfe4ea"/></linearGradient>
<linearGradient id="silver" x1="0" y1="0" x2="0" y2="1"><stop offset="0" stop-color="#c9cbcd"/><stop offset="1" stop-color="#8f9194"/></linearGradient>
<radialGradient id="siriA" cx="0.35" cy="0.25" r="0.5"><stop offset="0" stop-color="#e0409a" stop-opacity="0.950"/><stop offset="1" stop-color="#e0409a" stop-opacity="0"/></radialGradient><radialGradient id="siriB" cx="0.68" cy="0.62" r="0.45"><stop offset="0" stop-color="#3ae0c8" stop-opacity="0.900"/><stop offset="1" stop-color="#2a6ae0" stop-opacity="0"/></radialGradient><radialGradient id="siriC" cx="0.5" cy="0.5" r="0.28"><stop offset="0" stop-color="#ffffff" stop-opacity="0.950"/><stop offset="0.400" stop-color="#9adcf8" stop-opacity="0.600"/><stop offset="1" stop-color="#5a6ae8" stop-opacity="0"/></radialGradient><radialGradient id="siri" cx="0.5" cy="0.55" r="0.6"><stop offset="0" stop-color="#ffffff"/><stop offset="0.180" stop-color="#6fe0e8"/><stop offset="0.400" stop-color="#5a3ac0"/><stop offset="0.750" stop-color="#2a1250"/><stop offset="1" stop-color="#1a0c30"/></radialGradient>
<linearGradient id="stampsky" x1="0" y1="0" x2="0" y2="1"><stop offset="0" stop-color="#4a8ee6"/><stop offset="1" stop-color="#a4c6f0"/></linearGradient><linearGradient id="saf" x1="0" y1="0" x2="0" y2="1"><stop offset="0" stop-color="#2aa7f5"/><stop offset="1" stop-color="#1a5fd8"/></linearGradient>
<linearGradient id="itr" x1="0" y1="0" x2="0" y2="1"><stop offset="0" stop-color="#f54a8a"/><stop offset="0.500" stop-color="#b85ad8"/><stop offset="1" stop-color="#3aa0f0"/></linearGradient>
<linearGradient id="aps" x1="0" y1="0" x2="0" y2="1"><stop offset="0" stop-color="#2aa0f8"/><stop offset="1" stop-color="#1a68e0"/></linearGradient>
<linearGradient id="sysp" x1="0" y1="0" x2="0" y2="1"><stop offset="0" stop-color="#b9bcbf"/><stop offset="1" stop-color="#7e8184"/></linearGradient>
<linearGradient id="fold" x1="0" y1="0" x2="0" y2="1"><stop offset="0" stop-color="#5aaee0"/><stop offset="1" stop-color="#3f90cc"/></linearGradient>
<linearGradient id="trash" x1="0" y1="0" x2="1" y2="0"><stop offset="0" stop-color="#2e2e30"/><stop offset="0.500" stop-color="#4a4a4c"/><stop offset="1" stop-color="#2a2a2c"/></linearGradient>
<clipPath id="fcl"><rect x="144.700" y="557.300" width="40" height="37.300" rx="3"/></clipPath>
</defs>
<!-- finder -->
<g clip-path="url(#fcl)"><rect x="144.700" y="557.300" width="40" height="37.300" fill="url(#fb)"/>
<path d="M168.500 557.300 H185 V594.700 H170 Q168 586 170.500 580 L165.500 580 Q165 568 168.500 557.300Z" fill="url(#fw)"/></g>
<path d="M154.500 566v4.500M175 566v4.500" stroke="#1a2a3a" stroke-width="1.500" stroke-linecap="round"/>
<path d="M152 582 Q164.500 592 178 582" fill="none" stroke="#1a2a3a" stroke-width="1.400" stroke-linecap="round"/>
<circle cx="164.800" cy="605.300" r="1.200" fill="#9a9a9a"/>
<!-- siri -->
<circle cx="216.300" cy="576" r="21.300" fill="#d4d4dc"/><circle cx="216.300" cy="576" r="19.200" fill="#1c1038"/>
<circle cx="216.300" cy="576" r="19.200" fill="url(#siriA)"/><circle cx="216.300" cy="576" r="19.200" fill="url(#siriB)"/><circle cx="216.300" cy="576" r="19.200" fill="url(#siriC)"/>
<path d="M200 583 Q212 577 218 575 Q228 568 232 566 Q224 574 221 577 Q214 583 210 590 Q213 580 200 583Z" fill="#fff" opacity="0.550"/>
<path d="M214 562 Q217 572 219 576 Q222 584 222 592 Q218 582 216 577 Q213 570 214 562Z" fill="#ff7ad0" opacity="0.600"/>
<!-- launchpad -->
<circle cx="268.400" cy="576" r="21.300" fill="#8d8f92"/><circle cx="268.400" cy="576" r="20" fill="url(#silver)"/>
<path d="M281.500 562.500 Q272 563 265 570.500 L258.500 571.500 L254.500 577 L260.500 577.500 L267 584 L267.500 590 L273 586 L274 579.500 Q281.500 572.500 281.500 562.500Z" fill="#3c3e42"/>
<circle cx="274" cy="570.500" r="2" fill="#b4b6b9"/><path d="M259 582 L256 588 L262 585.500Z" fill="#3c3e42"/>
<!-- safari -->
<circle cx="320" cy="576" r="21.300" fill="#e9ecef"/><circle cx="320" cy="576" r="19.700" fill="url(#saf)"/>
<path d="M335.5 576.0L337.8 576.0M335.3 578.7L337.5 579.1M334.6 581.3L336.7 582.1M333.4 583.8L335.4 584.9M331.9 586.0L333.6 587.4M330.0 587.9L331.4 589.6M327.8 589.4L328.9 591.4M325.3 590.6L326.1 592.7M322.7 591.3L323.1 593.5M320.0 591.5L320.0 593.8M317.3 591.3L316.9 593.5M314.7 590.6L313.9 592.7M312.2 589.4L311.1 591.4M310.0 587.9L308.6 589.6M308.1 586.0L306.4 587.4M306.6 583.8L304.6 584.9M305.4 581.3L303.3 582.1M304.7 578.7L302.5 579.1M304.5 576.0L302.2 576.0M304.7 573.3L302.5 572.9M305.4 570.7L303.3 569.9M306.6 568.2L304.6 567.1M308.1 566.0L306.4 564.6M310.0 564.1L308.6 562.4M312.2 562.6L311.1 560.6M314.7 561.4L313.9 559.3M317.3 560.7L316.9 558.5M320.0 560.5L320.0 558.2M322.7 560.7L323.1 558.5M325.3 561.4L326.1 559.3M327.8 562.6L328.9 560.6M330.0 564.1L331.4 562.4M331.9 566.0L333.6 564.6M333.4 568.2L335.4 567.1M334.6 570.7L336.7 569.9M335.3 573.3L337.5 572.9" stroke="#dfeeff" stroke-width="0.600" opacity="0.800"/>
<path d="M333.500 562.500 L322 578 L318 574Z" fill="#e8303a"/><path d="M306.500 589.500 L322 578 L318 574Z" fill="#f2f4f6"/>
<circle cx="320" cy="605.300" r="1.200" fill="#9a9a9a"/>
<!-- mail stamp -->
<g transform="rotate(-6 371 576)"><rect x="355.500" y="557" width="31.500" height="38.500" fill="#f4f4f2" stroke="#f4f4f2" stroke-width="2" stroke-dasharray="2.200 1.400"/><rect x="358.300" y="559.800" width="26" height="33" fill="url(#stampsky)"/>
<path d="M362 565 Q364 562 366 565.500 L368 572 L376 577 L381 579 L377 583 L370 582 L365 578 L363 572Z" fill="#7a5a3c"/><path d="M362.500 564 q1.500 -2 3 0 l.8 3.500 l-3 0z" fill="#f0f0f0"/><path d="M371 591 l7 -7 l4 3 l-3 4z" fill="#dfe8f4" opacity="0.700"/></g>
<!-- notes -->
<g transform="rotate(-7 423 576)"><rect x="405" y="556" width="37" height="40" fill="#f8f7f1"/><rect x="405" y="556" width="37" height="6.500" fill="#f7c434"/>
<path d="M405 566.500h37M405 570h37M405 573.500h37M405 577h37M405 580.500h37M405 584h37M405 587.500h37M405 591h37" stroke="#cfcabd" stroke-width="0.500"/></g>
<!-- photos -->
<circle cx="474.600" cy="576" r="21.500" fill="#eef0f2"/>
<ellipse cx="474.600" cy="565.500" rx="5.500" ry="9.500" fill="#f6a623" opacity="0.850" transform="rotate(0 474.600 576)"/>
<ellipse cx="474.600" cy="565.500" rx="5.500" ry="9.500" fill="#f4d13a" opacity="0.850" transform="rotate(45 474.600 576)"/>
<ellipse cx="474.600" cy="565.500" rx="5.500" ry="9.500" fill="#a6cf4a" opacity="0.850" transform="rotate(90 474.600 576)"/>
<ellipse cx="474.600" cy="565.500" rx="5.500" ry="9.500" fill="#4fc0a0" opacity="0.850" transform="rotate(135 474.600 576)"/>
<ellipse cx="474.600" cy="565.500" rx="5.500" ry="9.500" fill="#4a9fe0" opacity="0.850" transform="rotate(180 474.600 576)"/>
<ellipse cx="474.600" cy="565.500" rx="5.500" ry="9.500" fill="#8a6fd0" opacity="0.850" transform="rotate(225 474.600 576)"/>
<ellipse cx="474.600" cy="565.500" rx="5.500" ry="9.500" fill="#d065b0" opacity="0.850" transform="rotate(270 474.600 576)"/>
<ellipse cx="474.600" cy="565.500" rx="5.500" ry="9.500" fill="#ef5a5a" opacity="0.850" transform="rotate(315 474.600 576)"/>
<!-- itunes -->
<circle cx="526.600" cy="576" r="21.500" fill="url(#itr)"/><circle cx="526.600" cy="576" r="18.800" fill="#f6f6f8"/>
<path d="M521 566.500 L535.500 563 V581.500 a3.200 2.800 0 1 1 -2.200 -2.700 V569 L523.200 571.500 V584.500 a3.200 2.800 0 1 1 -2.200 -2.700Z" fill="url(#itr)"/>
<!-- appstore -->
<circle cx="578.700" cy="576" r="21.500" fill="#e9ecef"/><circle cx="578.700" cy="576" r="19.800" fill="url(#aps)"/>
<path d="M576 563.500 L587.500 585 M581.500 563.500 L569 586.500 M565 579.500 H592.500" stroke="#fff" stroke-width="2.800" stroke-linecap="round" fill="none"/>
<!-- terminal -->
<rect x="608" y="556.600" width="42.500" height="38" rx="2.500" fill="#1e1e20" stroke="#4a4a4c" stroke-width="1"/>
<text x="613" y="570.500" font-family="Liberation Mono,monospace" font-weight="bold" font-size="10" fill="#f0f0f0">&gt;_</text>
<!-- sysprefs -->
<rect x="659.600" y="555.700" width="43.400" height="40.300" rx="1.500" fill="url(#sysp)"/>
<circle cx="681.300" cy="575.800" r="16" fill="#3a3a3c"/><rect x="679.800" y="558" width="3" height="4" fill="#3a3a3c" transform="rotate(0.0 681.300 575.800)"/>
<rect x="679.800" y="558" width="3" height="4" fill="#3a3a3c" transform="rotate(22.5 681.300 575.800)"/>
<rect x="679.800" y="558" width="3" height="4" fill="#3a3a3c" transform="rotate(45.0 681.300 575.800)"/>
<rect x="679.800" y="558" width="3" height="4" fill="#3a3a3c" transform="rotate(67.5 681.300 575.800)"/>
<rect x="679.800" y="558" width="3" height="4" fill="#3a3a3c" transform="rotate(90.0 681.300 575.800)"/>
<rect x="679.800" y="558" width="3" height="4" fill="#3a3a3c" transform="rotate(112.5 681.300 575.800)"/>
<rect x="679.800" y="558" width="3" height="4" fill="#3a3a3c" transform="rotate(135.0 681.300 575.800)"/>
<rect x="679.800" y="558" width="3" height="4" fill="#3a3a3c" transform="rotate(157.5 681.300 575.800)"/>
<rect x="679.800" y="558" width="3" height="4" fill="#3a3a3c" transform="rotate(180.0 681.300 575.800)"/>
<rect x="679.800" y="558" width="3" height="4" fill="#3a3a3c" transform="rotate(202.5 681.300 575.800)"/>
<rect x="679.800" y="558" width="3" height="4" fill="#3a3a3c" transform="rotate(225.0 681.300 575.800)"/>
<rect x="679.800" y="558" width="3" height="4" fill="#3a3a3c" transform="rotate(247.5 681.300 575.800)"/>
<rect x="679.800" y="558" width="3" height="4" fill="#3a3a3c" transform="rotate(270.0 681.300 575.800)"/>
<rect x="679.800" y="558" width="3" height="4" fill="#3a3a3c" transform="rotate(292.5 681.300 575.800)"/>
<rect x="679.800" y="558" width="3" height="4" fill="#3a3a3c" transform="rotate(315.0 681.300 575.800)"/>
<rect x="679.800" y="558" width="3" height="4" fill="#3a3a3c" transform="rotate(337.5 681.300 575.800)"/>
<circle cx="681.300" cy="575.800" r="12.600" fill="#9c9fa2"/><circle cx="681.300" cy="575.800" r="11" fill="#3e3f42"/>
<path d="M681.300 575.800 L690.500 575.800 M681.300 575.800 L676.700 567.800 M681.300 575.800 L676.700 583.800" stroke="#a6a9ac" stroke-width="2.800"/><circle cx="681.300" cy="575.800" r="2" fill="#a6a9ac"/>
<!-- pdfchef -->
<rect x="711.500" y="554.400" width="43.400" height="43.400" rx="9" fill="#f08a3c"/>
<rect x="722.300" y="564.300" width="21" height="23.300" rx="1.500" fill="none" stroke="#4a2408" stroke-width="1.300"/>
<path d="M727 569.500 L723.800 576 L727 582.500" stroke="#fff" stroke-width="6.500" stroke-linecap="round" stroke-linejoin="round" fill="none"/>
<path d="M733.500 566.500 L740.300 576 L733.500 585.500" stroke="#fff" stroke-width="6" stroke-linecap="round" stroke-linejoin="round" fill="none"/>
<circle cx="733" cy="604.800" r="1.200" fill="#9a9a9a"/>
<!-- separator -->
<path d="M770.700 553.500V599" stroke="#3a3a3c" stroke-width="1"/>
<!-- folder -->
<path d="M784.400 560 Q784.400 557.600 786.800 557.600 H798 L801.500 561 H828.500 Q830.700 561 830.700 563.200 V592 Q830.700 594 828.700 594 H786.400 Q784.400 594 784.400 592Z" fill="url(#fold)"/>
<rect x="784.400" y="563.500" width="46.300" height="1" fill="#3a86c0"/>
<circle cx="807.500" cy="578.500" r="8.300" fill="#3f8ac4"/><path d="M807.500 573.500 V582 M803.500 579 L807.500 583.500 L811.500 579" stroke="#5aaee0" stroke-width="2.400" fill="none"/>
<!-- trash -->
<path d="M842.500 558 H876 L872.500 593 Q871.500 597 866.500 597 H852 Q847 597 846 593Z" fill="url(#trash)"/>
<ellipse cx="859.300" cy="558" rx="16.800" ry="3.300" fill="#5a5a5e"/>
<path d="M846 556 L850 552.500 L856 555 L860 552 L866 554.500 L871 553 L873.500 557.500 L866 559.500 L852 559.500Z" fill="#e9e9eb"/>
<path d="M851 554 l4 1 l-2 3z M862 553.500 l4 1 l-3 3z" fill="#4a9a8a"/><path d="M857 555 l4 -1 l1 4z" fill="#c0504a"/>
</svg>
</div>
</div>
</body></html>
